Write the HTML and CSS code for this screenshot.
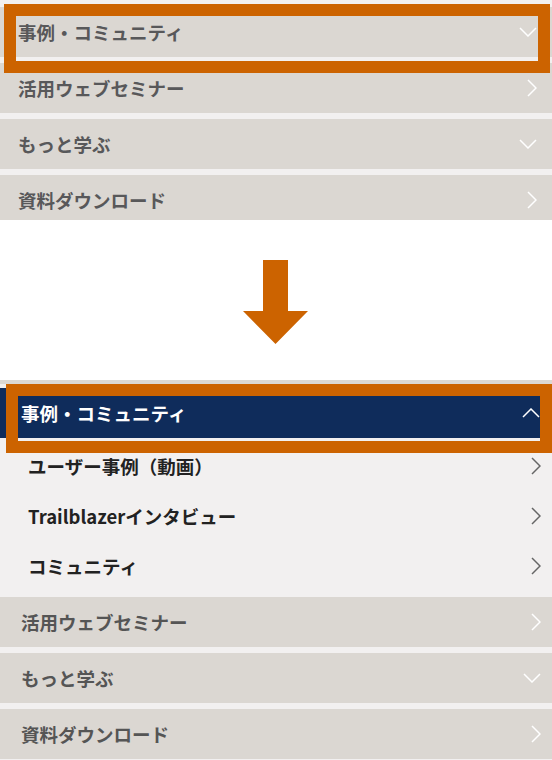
FILE: index.html
```html
<!DOCTYPE html>
<html lang="ja">
<head>
    <meta charset="utf-8">
    <title>メニュー開閉の説明</title>
    <link rel="stylesheet" href="styles.css">
</head>
<body>
    <!-- Before: collapsed menu -->
    <div class="shot shot-before">
        <ul class="menu">
            <li class="menu-row">
                <span>事例・コミュニティ</span>
                <svg class="chev-down" width="18" height="10" viewBox="0 0 18 10"><path d="M1 1 L9 9 L17 1" /></svg>
            </li>
            <li class="menu-row">
                <span>活用ウェブセミナー</span>
                <svg class="chev-right" width="10" height="18" viewBox="0 0 10 18"><path d="M1 1 L9 9 L1 17" /></svg>
            </li>
            <li class="menu-row">
                <span>もっと学ぶ</span>
                <svg class="chev-down" width="18" height="10" viewBox="0 0 18 10"><path d="M1 1 L9 9 L17 1" /></svg>
            </li>
            <li class="menu-row">
                <span>資料ダウンロード</span>
                <svg class="chev-right" width="10" height="18" viewBox="0 0 10 18"><path d="M1 1 L9 9 L1 17" /></svg>
            </li>
        </ul>
        <div class="highlight"></div>
    </div>

    <div class="arrow-area">
        <svg width="66" height="85" viewBox="0 0 66 85">
            <polygon points="20,0 45,0 45,51 65,51 32.5,84 0,51 20,51" fill="#cc6300" />
        </svg>
    </div>

    <!-- After: expanded menu -->
    <div class="shot shot-after">
        <ul class="menu">
            <li class="menu-row open">
                <span>事例・コミュニティ</span>
                <svg class="chev-up" width="18" height="10" viewBox="0 0 18 10"><path d="M1 9 L9 1 L17 9" /></svg>
            </li>
            <li class="submenu">
                <div class="sub-row">
                    <span>ユーザー事例（動画）</span>
                    <svg class="chev-right" width="10" height="18" viewBox="0 0 10 18"><path d="M1 1 L9 9 L1 17" /></svg>
                </div>
                <div class="sub-row">
                    <span>Trailblazerインタビュー</span>
                    <svg class="chev-right" width="10" height="18" viewBox="0 0 10 18"><path d="M1 1 L9 9 L1 17" /></svg>
                </div>
                <div class="sub-row">
                    <span>コミュニティ</span>
                    <svg class="chev-right" width="10" height="18" viewBox="0 0 10 18"><path d="M1 1 L9 9 L1 17" /></svg>
                </div>
            </li>
            <li class="menu-row">
                <span>活用ウェブセミナー</span>
                <svg class="chev-right" width="10" height="18" viewBox="0 0 10 18"><path d="M1 1 L9 9 L1 17" /></svg>
            </li>
            <li class="menu-row">
                <span>もっと学ぶ</span>
                <svg class="chev-down" width="18" height="10" viewBox="0 0 18 10"><path d="M1 1 L9 9 L17 1" /></svg>
            </li>
            <li class="menu-row">
                <span>資料ダウンロード</span>
                <svg class="chev-right" width="10" height="18" viewBox="0 0 10 18"><path d="M1 1 L9 9 L1 17" /></svg>
            </li>
        </ul>
        <div class="highlight"></div>
    </div>
</body>
</html>
```

FILE: styles.css
```css
body {
    margin: 0;
    width: 552px;
    font-family: "Noto Sans CJK JP", "Noto Sans", sans-serif;
    background: #fff;
}
.shot {
    position: relative;
    overflow: hidden;
    background: #f2f0f0;
}
.menu {
    list-style: none;
    margin: 0;
    padding: 0;
    display: flex;
    flex-direction: column;
    gap: 6px;
}
.menu-row {
    height: 50px;
    display: flex;
    align-items: center;
    justify-content: space-between;
    background: #dbd7d2;
    font-size: 18.5px;
    font-weight: bold;
    color: #58585a;
}
.menu-row svg path,
.sub-row svg path {
    fill: none;
    stroke: #fff;
    stroke-width: 1.5;
}

/* before */
.shot-before {
    height: 220px;
    padding-top: 7px;
    box-sizing: border-box;
}
.shot-before .menu-row {
    padding: 0 15px 0 18px;
}
.shot-before .highlight {
    left: 4px;
    top: 4px;
    width: 522px;
    height: 45px;
}

.arrow-area {
    height: 160px;
    display: flex;
    justify-content: center;
    align-items: flex-start;
    box-sizing: border-box;
    padding-top: 40px;
}

/* after */
.shot-after {
    border-top: 4px solid #dcd8d3;
    padding-top: 4px;
    height: 380px;
    box-sizing: border-box;
}
.shot-after .menu-row {
    padding: 0 11px 0 21px;
    color: #555;
}
.shot-after .menu-row.open {
    background: #0f2c5b;
    color: #fff;
    padding-right: 12px;
}
.submenu {
    margin-top: -3px;
    display: flex;
    flex-direction: column;
}
.sub-row {
    height: 50px;
    display: flex;
    align-items: center;
    justify-content: space-between;
    padding: 0 11px 0 28px;
    font-size: 18.5px;
    font-weight: bold;
    color: #222;
}
.sub-row svg path {
    stroke: #666;
}
.shot-after .highlight {
    left: 6px;
    top: 0;
    width: 522px;
    height: 45px;
}

.highlight {
    position: absolute;
    border: 12px solid #cc6300;
}
```
